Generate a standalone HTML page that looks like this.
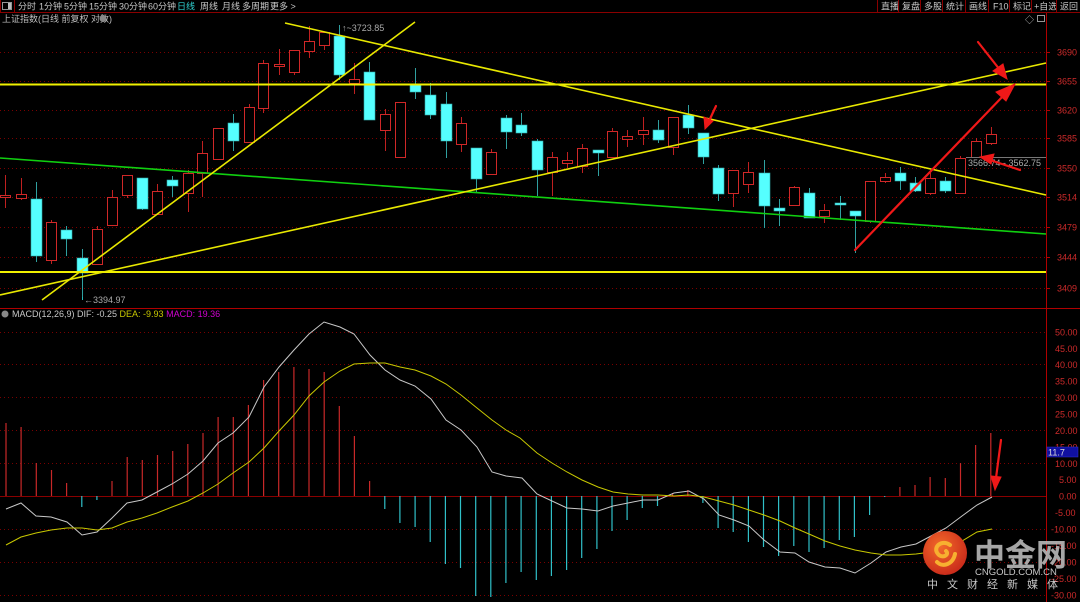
<!DOCTYPE html>
<html><head><meta charset="utf-8"><style>
html,body{margin:0;padding:0;background:#000;width:1080px;height:602px;overflow:hidden}
svg{display:block}
text{font-family:"Liberation Sans","Noto Sans CJK SC",sans-serif}
</style></head><body>
<svg id="s" width="1080" height="602" viewBox="0 0 1080 602" xmlns="http://www.w3.org/2000/svg">
<rect width="1080" height="602" fill="#000"/>
<rect x="0" y="0" width="1080" height="12" fill="#000"/>
<line x1="0" y1="12.5" x2="1080" y2="12.5" stroke="#8a0000"/>
<line x1="0.5" y1="0" x2="0.5" y2="12" stroke="#8a0000"/>
<rect x="2.5" y="2.5" width="9" height="7" fill="none" stroke="#bbb" stroke-width="0.8"/>
<rect x="8" y="3" width="3" height="6" fill="#bbb"/>
<line x1="14.5" y1="0" x2="14.5" y2="12" stroke="#8a0000"/>
<g font-size="9" fill="#c8c8c8">
<text x="18" y="9.5">分时</text><text x="39" y="9.5">1分钟</text><text x="64" y="9.5">5分钟</text>
<text x="89" y="9.5">15分钟</text><text x="119" y="9.5">30分钟</text><text x="148" y="9.5">60分钟</text>
<text x="177" y="9.5" fill="#2fd0d0">日线</text><text x="200" y="9.5">周线</text><text x="222" y="9.5">月线</text>
<text x="242" y="9.5">多周期</text><text x="270" y="9.5">更多 &gt;</text>
<text x="881" y="9.5">直播</text><text x="902" y="9.5">复盘</text><text x="924" y="9.5">多股</text>
<text x="946" y="9.5">统计</text><text x="969" y="9.5">画线</text><text x="993" y="9.5">F10</text>
<text x="1013" y="9.5">标记</text><text x="1034" y="9.5">+自选</text><text x="1060" y="9.5">返回</text>
</g>
<g stroke="#8a0000">
<line x1="877.5" y1="0" x2="877.5" y2="12"/><line x1="898.5" y1="0" x2="898.5" y2="12"/><line x1="920.5" y1="0" x2="920.5" y2="12"/>
<line x1="942.5" y1="0" x2="942.5" y2="12"/><line x1="965.5" y1="0" x2="965.5" y2="12"/><line x1="988.5" y1="0" x2="988.5" y2="12"/>
<line x1="1009.5" y1="0" x2="1009.5" y2="12"/><line x1="1031.5" y1="0" x2="1031.5" y2="12"/><line x1="1056.5" y1="0" x2="1056.5" y2="12"/>
</g>
<text x="2" y="22" font-size="9" fill="#bdbdbd">上证指数(日线 前复权 对数)</text>
<circle cx="103" cy="18.5" r="3.5" fill="#888"/>
<text x="1025" y="23" font-size="9" fill="#bbb">◇</text>
<rect x="1037.5" y="15.5" width="7" height="6" fill="none" stroke="#bbb" stroke-width="0.8"/>
<line x1="1046.5" y1="13" x2="1046.5" y2="602" stroke="#b00000"/>
<line x1="0" y1="308.5" x2="1080" y2="308.5" stroke="#b00000"/>
<g stroke="#7a0000" stroke-dasharray="1,3" stroke-width="1">
<line x1="0" y1="52.5" x2="1046" y2="52.5"/><line x1="0" y1="81.5" x2="1046" y2="81.5"/><line x1="0" y1="110.5" x2="1046" y2="110.5"/>
<line x1="0" y1="138.5" x2="1046" y2="138.5"/><line x1="0" y1="168.5" x2="1046" y2="168.5"/><line x1="0" y1="197.5" x2="1046" y2="197.5"/>
<line x1="0" y1="227.5" x2="1046" y2="227.5"/><line x1="0" y1="257.5" x2="1046" y2="257.5"/><line x1="0" y1="288.5" x2="1046" y2="288.5"/>
<line x1="0" y1="332.5" x2="1046" y2="332.5"/><line x1="0" y1="364.5" x2="1046" y2="364.5"/><line x1="0" y1="397.5" x2="1046" y2="397.5"/>
<line x1="0" y1="430.5" x2="1046" y2="430.5"/><line x1="0" y1="463.5" x2="1046" y2="463.5"/><line x1="0" y1="529.5" x2="1046" y2="529.5"/>
<line x1="0" y1="562.5" x2="1046" y2="562.5"/><line x1="0" y1="595.5" x2="1046" y2="595.5"/>
</g>
<line x1="0" y1="496.5" x2="1046" y2="496.5" stroke="#8a0000"/>
<g stroke="#b00000"><line x1="1046" y1="52.5" x2="1050" y2="52.5"/><line x1="1046" y1="81.5" x2="1050" y2="81.5"/><line x1="1046" y1="110.5" x2="1050" y2="110.5"/><line x1="1046" y1="138.5" x2="1050" y2="138.5"/><line x1="1046" y1="168.5" x2="1050" y2="168.5"/><line x1="1046" y1="197.5" x2="1050" y2="197.5"/><line x1="1046" y1="227.5" x2="1050" y2="227.5"/><line x1="1046" y1="257.5" x2="1050" y2="257.5"/><line x1="1046" y1="288.5" x2="1050" y2="288.5"/></g>
<g font-size="9" fill="#cc2a2a">
<text x="1057" y="55.5">3690</text><text x="1057" y="84.5">3655</text><text x="1057" y="113.5">3620</text>
<text x="1057" y="141.5">3585</text><text x="1057" y="171.5">3550</text><text x="1057" y="200.5">3514</text>
<text x="1057" y="230.5">3479</text><text x="1057" y="260.5">3444</text><text x="1057" y="291.5">3409</text>
<text x="1055" y="335.5">50.00</text><text x="1055" y="352">45.00</text><text x="1055" y="368">40.00</text>
<text x="1055" y="384.5">35.00</text><text x="1055" y="401">30.00</text><text x="1055" y="417.5">25.00</text>
<text x="1055" y="434">20.00</text><text x="1055" y="450.5">15.00</text><text x="1055" y="467">10.00</text>
<text x="1059" y="483">5.00</text><text x="1059" y="499.5">0.00</text><text x="1055" y="516">-5.00</text>
<text x="1051" y="532.5">-10.00</text><text x="1051" y="549">-15.00</text><text x="1051" y="565.5">-20.00</text>
<text x="1051" y="582">-25.00</text><text x="1051" y="598.5">-30.00</text>
</g>
<rect x="1047" y="447" width="31" height="10" fill="#1010a0" stroke="#3030d0" stroke-width="0.5"/>
<text x="1048" y="455.5" font-size="9" fill="#ddd">11.7</text>
<g id="cand"></g>
<g id="bars"></g>
<g stroke-width="1.6">
<line x1="0" y1="84.5" x2="1046" y2="84.5" stroke="#f0f000" stroke-width="2"/>
<line x1="0" y1="272" x2="1046" y2="272" stroke="#f0f000" stroke-width="2"/>
<line x1="0" y1="158" x2="1046" y2="234" stroke="#10d010"/>
<line x1="42" y1="300" x2="415" y2="22" stroke="#e8e800"/>
<line x1="0" y1="295" x2="1046" y2="63" stroke="#e8e800"/>
<line x1="285" y1="23" x2="1046" y2="195" stroke="#e8e800"/>
</g>
<line x1="966" y1="157.5" x2="1046" y2="157.5" stroke="#777"/>
<text x="968" y="166" font-size="9" fill="#aaa">3566.74 - 3562.75</text>
<text x="342" y="31" font-size="9" fill="#aaa">↑~3723.85</text>
<line x1="82.5" y1="297" x2="82.5" y2="300" stroke="#2bb"/>
<text x="84" y="303" font-size="9" fill="#aaa">←3394.97</text>
<g fill="#f01818" stroke="#f01818" stroke-width="2.2" stroke-linecap="round">
<line x1="855" y1="250" x2="1005" y2="94"/><polygon points="1015,84 996,92 1006,101" stroke-width="1"/>
<line x1="978" y1="42" x2="1000" y2="70"/><polygon points="1007,79 993,71 1003,64" stroke-width="1"/>
<line x1="1020" y1="170" x2="990" y2="160"/><polygon points="980,157 994,154 991,164" stroke-width="1"/>
<line x1="716" y1="106" x2="709" y2="121"/><polygon points="705,129 704,117 713,121" stroke-width="1"/>
<line x1="1001" y1="440" x2="996" y2="478"/><polygon points="995,490 991,476 1001,477" stroke-width="1"/>
</g>
<polyline fill="none" stroke="#c8c8c8" stroke-width="1" points="6,509 21,503 36,516 51,517 67,522 82,535 97,532 112,518 127,503 142,500 157,492 172,484 188,474 203,461 218,443 233,433 249,417 264,387 279,367 294,350 309,334 324,322 340,327 354,334 370,355 385,370 400,380 415,386 431,399 446,420 461,430 477,447 492,472 506,476 522,478 537,494 552,501 567,508 582,509 598,511 613,506 628,503 643,500 658,500 674,493 689,491 704,499 719,515 734,520 749,526 764,540 780,552 795,553 809,562 825,567 840,568 855,573 871,563 886,552 901,547 916,544 931,536 946,528 962,516 977,505 992,497"/>
<polyline fill="none" stroke="#c8c800" stroke-width="1" points="6,545 21,537 36,533 51,530 67,528 82,528 97,530 112,528 127,522 142,518 157,513 172,507 188,501 203,493 218,484 233,473 249,462 264,448 279,431 294,415 309,396 324,382 340,371 354,364 370,363 385,363 400,367 415,370 431,376 446,384 461,395 477,408 492,420 506,430 520,438 537,453 552,463 567,472 582,480 598,487 613,492 628,494 643,495 658,495 674,496 689,495 704,497 719,501 734,505 749,510 764,515 780,521 795,528 809,534 825,541 840,546 855,550 871,553 886,555 901,555 916,554 931,552 946,549 962,541 977,532 992,529"/>
<circle cx="5" cy="314" r="3.5" fill="#888"/>
<text x="12" y="317" font-size="9" fill="#c8c8c8">MACD(12,26,9) DIF: -0.25 <tspan fill="#c8c800">DEA: -9.93</tspan> <tspan fill="#d000d0">MACD: 19.36</tspan></text>
<defs><radialGradient id="g" cx="0.4" cy="0.35" r="0.7"><stop offset="0" stop-color="#f26a2a"/><stop offset="1" stop-color="#c8281a"/></radialGradient></defs>
<circle cx="945" cy="553" r="22" fill="url(#g)"/>
<path d="M950,545 c-8,-6 -18,2 -12,9 c4,5 12,1 8,-3 M937,562 c6,6 16,2 18,-8" fill="none" stroke="#f7b030" stroke-width="4" stroke-linecap="round"/>
<text x="974" y="566" font-size="31" font-weight="bold" fill="#b8b8b8" font-family="Noto Sans CJK SC,sans-serif" opacity="0.9">中金网</text>
<text x="975" y="575" font-size="9.5" fill="#c8c8c8">CNGOLD.COM.CN</text>
<text x="927" y="588" font-size="11" fill="#c8c8c8" letter-spacing="9">中文财经新媒体</text>
</svg>
<script>
var C=[[0,195,197,175,208,1],[16,194,198,178,200,1],[31,199,255,182,262,0],[46,222,260,220,264,1],[61,230,238,226,256,0],[77,258,272,249,300,0],[92,229,264,226,264,1],[107,197,225,190,225,1],[122,175,195,175,198,1],[137,178,208,178,210,0],[152,191,214,184,214,1],[167,180,185,176,197,0],[183,173,193,170,212,1],
[197,153,173,141,197,1],[213,128,159,128,160,1],[228,123,140,114,151,0],[244,107,142,104,142,1],[258,63,108,60,113,1],[274,64,66,49,75,1],[289,50,72,50,75,1],[304,41,51,26,58,1],[319,32,45,32,50,1],[334,36,74,25,80,0],[349,79,83,63,94,1],[364,72,119,62,119,0],[380,114,130,109,151,1],[395,102,157,102,158,1],[410,85,91,68,99,0],[425,95,114,83,119,0],[441,104,140,92,158,0],[456,123,144,117,152,1],[471,148,178,148,193,0],[486,152,174,149,174,1],[501,118,131,115,149,0],[516,125,132,113,136,0],[532,141,169,139,196,0],
[547,157,172,152,196,1],[562,160,163,152,168,1],[577,148,166,144,173,1],[593,150,152,150,176,0],[607,131,157,128,158,1],[622,136,139,130,147,1],[638,130,134,117,145,1],[653,130,139,120,143,0],[668,117,147,117,155,1],[683,115,127,105,134,0],[698,133,156,133,164,0],[713,168,193,165,201,0],[728,170,193,170,207,1],[743,172,184,162,193,1],[759,173,205,160,228,0],[774,208,210,199,226,0],[789,187,205,186,206,1],[804,193,217,188,217,0],[819,210,216,204,223,1],[835,203,204,196,220,0],[850,211,215,211,253,0],[865,181,221,181,223,1],
[880,177,181,173,183,1],[895,173,180,167,190,0],[910,183,190,177,192,0],[925,178,193,173,195,1],[940,181,190,177,193,0],[955,158,193,156,194,1],[971,141,157,138,158,1],[986,134,143,127,145,1]];
var h='';
C.forEach(function(c){var x=c[0],cx=x+5.5,red=c[5];
var wc=red?'#c02020':'#30a0a0';
h+='<line x1="'+cx+'" y1="'+c[3]+'" x2="'+cx+'" y2="'+c[1]+'" stroke="'+wc+'"/>';
h+='<line x1="'+cx+'" y1="'+c[2]+'" x2="'+cx+'" y2="'+c[4]+'" stroke="'+wc+'"/>';
var bh=Math.max(1,c[2]-c[1]);
if(red)h+='<rect x="'+(x+0.5)+'" y="'+(c[1]+0.5)+'" width="10" height="'+bh+'" fill="#000" stroke="#d02828"/>';
else h+='<rect x="'+x+'" y="'+c[1]+'" width="11" height="'+(bh+1)+'" fill="#55ffff" stroke="#30a8a8" stroke-width="0.6"/>';});
document.getElementById('cand').innerHTML=h;
var B=[423,427,463,470,483,507,500,481,457,460,455,451,444,433,417,417,405,380,372,367,369,372,406,436,481,509,523,527,542,564,568,596,597,583,572,580,576,570,558,549,531,520,508,506,493,490,503,528,532,542,547,556,546,552,548,540,537,515,497,487,485,477,478,463,445,433];
var g='';B.forEach(function(y,i){var x=(6+i*15.15).toFixed(1);
var col=y<496?'#c82828':'#30c0c8';
g+='<line x1="'+x+'" y1="496" x2="'+x+'" y2="'+y+'" stroke="'+col+'" stroke-width="1.2"/>';});
document.getElementById('bars').innerHTML=g;
</script>
</body></html>
